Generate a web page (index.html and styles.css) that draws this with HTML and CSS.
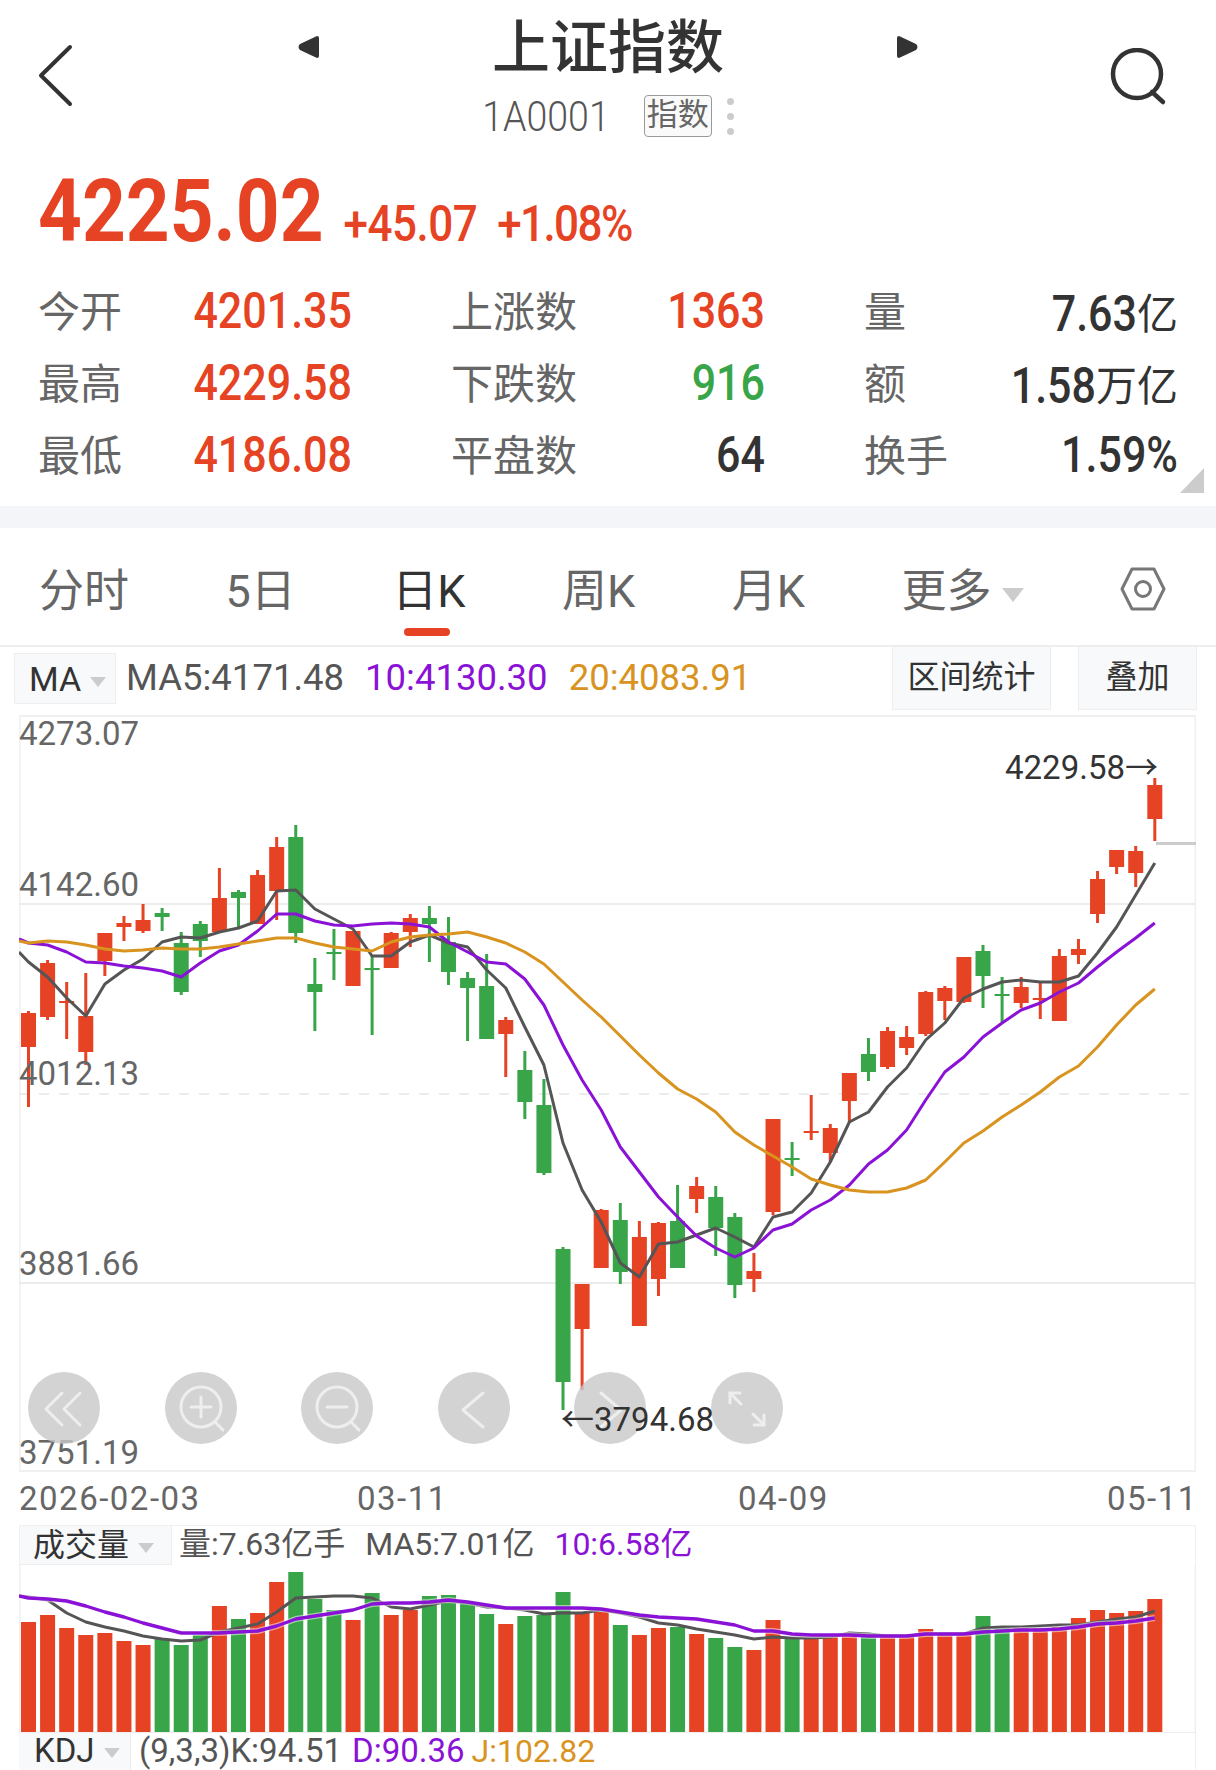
FILE: index.html
```html
<!DOCTYPE html>
<html lang="zh-CN">
<head>
  <meta charset="UTF-8">
  <title>上证指数</title>
  <link rel="stylesheet" href="styles.css">
</head>
<body>

<header class="topbar">
  <svg class="back-icon" width="40" height="66" viewBox="0 0 40 66">
    <polyline points="34,3 5,31.5 34,60" />
  </svg>
  <div class="title-block">
    <div class="title-row">
      <svg width="22" height="26" viewBox="0 0 22 26"><path d="M20 2 L3 10 Q0 13 3 16 L20 24 Q22 24 22 22 L22 4 Q22 2 20 2 Z" /></svg>
      <h1>上证指数</h1>
      <svg width="22" height="26" viewBox="0 0 22 26"><path d="M2 2 L19 10 Q22 13 19 16 L2 24 Q0 24 0 22 L0 4 Q0 2 2 2 Z" /></svg>
    </div>
    <div class="code-row">
      <span class="code">1A0001</span>
      <span class="badge">指数</span>
      <span class="dots"><i></i><i></i><i></i></span>
    </div>
  </div>
  <svg class="search-icon" width="58" height="58" viewBox="0 0 58 58">
    <circle cx="27" cy="26" r="24" />
    <line x1="42" y1="44" x2="53" y2="54" />
  </svg>
</header>

<section class="quote">
  <span class="price">4225.02</span>
  <span class="change">+45.07</span>
  <span class="change change-pct">+1.08%</span>
</section>

<section class="stats">
  <div class="stat"><span class="stat-label">今开</span><span class="stat-value up">4201.35</span></div>
  <div class="stat"><span class="stat-label">上涨数</span><span class="stat-value up">1363</span></div>
  <div class="stat"><span class="stat-label">量</span><span class="stat-value">7.63<small>亿</small></span></div>
  <div class="stat"><span class="stat-label">最高</span><span class="stat-value up">4229.58</span></div>
  <div class="stat"><span class="stat-label">下跌数</span><span class="stat-value down">916</span></div>
  <div class="stat"><span class="stat-label">额</span><span class="stat-value">1.58<small>万亿</small></span></div>
  <div class="stat"><span class="stat-label">最低</span><span class="stat-value up">4186.08</span></div>
  <div class="stat"><span class="stat-label">平盘数</span><span class="stat-value">64</span></div>
  <div class="stat"><span class="stat-label">换手</span><span class="stat-value">1.59%</span></div>
  <span class="corner"></span>
</section>

<div class="band"></div>

<nav class="tabs">
  <a class="tab">分时</a>
  <a class="tab">5日</a>
  <a class="tab tab-active">日K</a>
  <a class="tab">周K</a>
  <a class="tab">月K</a>
  <a class="tab">更多<span class="caret caret-tab"></span></a>
  <svg class="hex-icon" width="46" height="46" viewBox="0 0 46 46">
    <polygon points="12,3 34,3 44,23 34,43 12,43 2,23" />
    <circle cx="23" cy="23" r="7.5" />
  </svg>
</nav>

<div class="ma-row">
  <div class="picker picker-ma">MA<span class="caret"></span></div>
  <span class="legend">MA5:4171.48</span>
  <span class="legend purple">10:4130.30</span>
  <span class="legend orange">20:4083.91</span>
  <a class="tool tool-range">区间统计</a>
  <a class="tool tool-add">叠加</a>
</div>

<section class="kline">
  <svg id="kline-chart" width="1177" height="757" viewBox="19 715 1177 757"></svg>

  <div class="y-labels">
    <span>4273.07</span>
    <span>4142.60</span>
    <span>4012.13</span>
    <span>3881.66</span>
    <span>3751.19</span>
  </div>

  <div class="float-buttons">
    <svg class="round-btn" width="72" height="72" viewBox="-36 -36 72 72"><polyline points="-2,-15 -18,1 -2,17" /><polyline points="16,-15 0,1 16,17" /></svg>
    <svg class="round-btn" width="72" height="72" viewBox="-36 -36 72 72"><circle cx="0" cy="-1" r="20" /><line x1="14" y1="14" x2="22" y2="22" /><line x1="-10" y1="-1" x2="10" y2="-1" /><line x1="0" y1="-11" x2="0" y2="9" /></svg>
    <svg class="round-btn" width="72" height="72" viewBox="-36 -36 72 72"><circle cx="0" cy="-1" r="20" /><line x1="14" y1="14" x2="22" y2="22" /><line x1="-10" y1="-1" x2="10" y2="-1" /></svg>
    <svg class="round-btn" width="72" height="72" viewBox="-36 -36 72 72"><polyline points="9,-15 -11,2 9,19" /></svg>
    <svg class="round-btn" width="72" height="72" viewBox="-36 -36 72 72"><polyline points="-9,-15 11,2 -9,19" /></svg>
    <svg class="round-btn" width="72" height="72" viewBox="-36 -36 72 72"><polyline points="-7,-15 -17,-15 -17,-5" /><line x1="-17" y1="-15" x2="-6" y2="-4" /><polyline points="17,7 17,17 7,17" /><line x1="17" y1="17" x2="6" y2="6" /></svg>
  </div>

  <span class="mark mark-high">4229.58→</span>
  <span class="mark mark-low">←3794.68</span>
</section>

<div class="dates">
  <span>2026-02-03</span>
  <span>03-11</span>
  <span>04-09</span>
  <span>05-11</span>
</div>

<section class="volume">
  <div class="volume-head">
    <div class="picker picker-vol">成交量<span class="caret"></span></div>
    <span class="vol-text">量:7.63亿手</span>
    <span class="vol-text">MA5:7.01亿</span>
    <span class="vol-text purple">10:6.58亿</span>
  </div>
  <svg id="volume-chart" width="1177" height="167" viewBox="19 1565 1177 167"></svg>
</section>

<div class="kdj-row">
  <div class="picker picker-kdj">KDJ<span class="caret"></span></div>
  <span class="kdj-text">(9,3,3)K:94.51</span>
  <span class="kdj-text purple">D:90.36</span>
  <span class="kdj-text orange">J:102.82</span>
</div>

<script src="chart.js"></script>
</body>
</html>
```

FILE: styles.css
```css
/* General */
body {
  margin: 0;
  width: 1216px;
  height: 1770px;
  overflow: hidden;
  background: #fff;
  color: #333;
  font-family: Roboto, "Noto Sans CJK SC", sans-serif;
}

/* Top bar */
.topbar {
  display: flex;
  align-items: flex-start;
  height: 145px;
  padding: 10px 48px 0 36px;
  box-sizing: border-box;
}
.back-icon {
  margin-top: 34px;
  fill: none;
  stroke: #333;
  stroke-width: 4;
  stroke-linecap: round;
  stroke-linejoin: round;
}
.search-icon {
  margin-top: 38px;
  margin-left: auto;
  fill: none;
  stroke: #333;
  stroke-width: 4.5;
  stroke-linecap: round;
}
.title-block {
  width: 622px;
  margin-left: 221px;
}
.title-row {
  display: flex;
  justify-content: space-between;
  align-items: center;
  height: 76px;
  fill: #333;
}
.title-row svg { margin-top: -2px; }
h1 {
  margin: 0;
  font-size: 58px;
  line-height: 76px;
  font-weight: 500;
  color: #333;
}
.code-row {
  display: flex;
  justify-content: center;
  align-items: center;
  height: 46px;
  margin-top: 7px;
}
.code {
  display: inline-block;
  font-size: 37.5px;
  font-weight: 300;
  color: #555;
  transform: scaleY(1.15);
}
.badge {
  margin-left: 34px;
  width: 68px;
  height: 42px;
  box-sizing: border-box;
  border: 1px solid #999;
  border-radius: 4px;
  font-size: 31px;
  line-height: 38px;
  text-align: center;
  color: #666;
  background: #fafafa;
}
.dots {
  display: flex;
  flex-direction: column;
  gap: 8px;
  margin-left: 15px;
}
.dots i {
  width: 7px;
  height: 7px;
  border-radius: 50%;
  background: #ccc;
}

/* Price, Roboto is wider than the app's number font so digits get stretched up */
.quote {
  display: flex;
  align-items: baseline;
  height: 130px;
  padding: 11px 0 0 38px;
  box-sizing: border-box;
}
.price {
  display: inline-block;
  font-size: 76.5px;
  line-height: 110px;
  font-weight: 700;
  color: #e64325;
  transform: scaleY(1.15);
}
.change {
  display: inline-block;
  margin-left: 20px;
  font-size: 44px;
  font-weight: 500;
  letter-spacing: -0.5px;
  color: #e64325;
  transform: translateY(2px) scaleY(1.15);
}
.change-pct { letter-spacing: -1.6px; }

/* Stat rows */
.stats {
  position: relative;
  display: grid;
  grid-template-columns: 314px 314px 314px;
  column-gap: 99px;
  grid-auto-rows: 72px;
  height: 231px;
  padding-left: 38px;
}
.stat {
  display: flex;
  justify-content: space-between;
  align-items: center;
}
.stat-label {
  margin-top: -5px;
  font-size: 42px;
  color: #666;
}
.stat-value {
  display: inline-block;
  margin-top: -2px;
  font-size: 43px;
  font-weight: 500;
  transform: scaleY(1.18);
}
.stat-value small {
  display: inline-block;
  font-size: 41px;
  font-weight: 400;
  transform: scaleY(0.88);
}
.corner {
  position: absolute;
  right: 12px;
  bottom: 13px;
  width: 24px;
  height: 25px;
  background: #ccc;
  clip-path: polygon(100% 0, 100% 100%, 0 100%);
}
.band {
  height: 22px;
  background: #f3f5f9;
}

/* Tabs */
.tabs {
  display: flex;
  align-items: center;
  gap: 96.5px;
  height: 119px;
  padding: 11px 0 0 39px;
  box-sizing: border-box;
  border-bottom: 2px solid #eee;
}
.tab {
  position: relative;
  font-size: 45px;
  line-height: 60px;
  color: #666;
}
.tab-active { color: #333; }
.tab-active::after {
  content: "";
  position: absolute;
  left: 12px;
  bottom: -14px;
  width: 46px;
  height: 8px;
  border-radius: 4px;
  background: #e64325;
}
.caret {
  display: inline-block;
  width: 0;
  height: 0;
  margin-left: 9px;
  border-left: 8px solid transparent;
  border-right: 8px solid transparent;
  border-top: 10px solid #ccc;
  vertical-align: middle;
}
.caret-tab {
  margin-left: 10px;
  border-left-width: 11px;
  border-right-width: 11px;
  border-top-width: 14px;
}
.hex-icon {
  fill: none;
  stroke: #777;
  stroke-width: 3;
  stroke-linejoin: round;
  margin-bottom: 6px;
}

/* MA legend row */
.ma-row {
  display: flex;
  align-items: flex-start;
  height: 68px;
}
.picker {
  box-sizing: border-box;
  background: #f8f9fb;
  border-right: 1px solid #eee;
  border-bottom: 1px solid #eee;
  color: #333;
  white-space: nowrap;
}
.picker-ma {
  width: 102px;
  height: 51px;
  margin: 6px 10px 0 14px;
  padding-left: 14px;
  font-size: 34px;
  line-height: 50px;
  border-top: 1px solid #eee;
  border-left: 1px solid #eee;
}
.legend {
  margin-right: 21px;
  font-size: 36.5px;
  line-height: 62px;
  color: #555;
}
.tool {
  box-sizing: border-box;
  height: 63px;
  background: #f8f9fb;
  border-right: 1px solid #eee;
  border-bottom: 1px solid #eee;
  border-left: 1px solid #eee;
  font-size: 32px;
  line-height: 60px;
  text-align: center;
  color: #333;
}
.tool-range {
  width: 159px;
  margin-left: auto;
}
.tool-add {
  width: 119px;
  margin: 0 19px 0 27px;
}

/* K line panel */
.kline {
  position: relative;
  width: 1177px;
  height: 757px;
  margin-left: 19px;
}
.kline svg { display: block; }
.y-labels {
  position: absolute;
  top: 0;
  left: 0;
  display: grid;
  grid-template-rows: 38px 151px 189px 190px 189px;
  font-size: 33px;
  color: #666;
}
.y-labels span {
  align-self: end;
  line-height: 38px;
}
.float-buttons {
  position: absolute;
  left: 9px;
  top: 657px;
  display: flex;
  gap: 64.5px;
}
.round-btn {
  border-radius: 50%;
  background: rgba(200, 200, 200, 0.8);
  fill: none;
  stroke: #eee;
  stroke-width: 3;
  stroke-linecap: round;
  stroke-linejoin: round;
}
.mark {
  position: absolute;
  font-size: 33px;
  line-height: 38px;
  color: #333;
  white-space: nowrap;
}
.mark-high { left: 986px; top: 34px; }
.mark-low { left: 542px; top: 686px; }

/* Date axis */
.dates {
  display: grid;
  grid-template-columns: 338px 381px 369px auto;
  height: 53px;
  padding-left: 19px;
  font-size: 33px;
  line-height: 54px;
  letter-spacing: 1.5px;
  color: #666;
}

/* Volume panel */
.volume {
  width: 1177px;
  height: 207px;
  margin-left: 19px;
}
.volume svg { display: block; }
.volume-head {
  display: flex;
  align-items: flex-start;
  box-sizing: border-box;
  height: 40px;
  border-top: 1px solid #f0f0f0;
  border-left: 1px solid #f0f0f0;
  border-right: 1px solid #f0f0f0;
}
.picker-vol {
  width: 152px;
  height: 39px;
  padding-left: 13px;
  font-size: 32px;
  line-height: 38px;
}
.vol-text {
  margin-left: 7px;
  margin-right: 13px;
  font-size: 32px;
  line-height: 36px;
  color: #555;
}

/* KDJ row */
.kdj-row {
  display: flex;
  align-items: flex-start;
  box-sizing: border-box;
  width: 1177px;
  height: 38px;
  margin-left: 19px;
  border-top: 1px solid #eee;
  border-right: 1px solid #f0f0f0;
}
.picker-kdj {
  width: 112px;
  height: 38px;
  padding-left: 15px;
  font-size: 33px;
  line-height: 36px;
  border-bottom: 0;
}
.kdj-text {
  margin-left: 8px;
  margin-right: 2px;
  font-size: 33px;
  line-height: 36px;
  color: #555;
}
.kdj-text.orange {
  margin-left: 5px;
  font-size: 32px;
}

/* Quote colours */
.up { color: #e64325; }
.down { color: #38a549; }
.purple { color: #8a12d6; }
.orange { color: #d9931f; }
```

FILE: chart.js
```js
const RED = "#e64325";
const GREEN = "#38a549";
const GRAY = "#555";
const PURPLE = "#8a12d6";
const ORANGE = "#d9931f";

const firstX = 28.5;
const stepX = 19.09;

// colour, body top, body bottom, wick top, wick bottom (page pixels)
const candles = [
  ["r",1013,1047,1011,1107], ["r",963,1017,960,1020], ["r",1001,1003,982,1039], ["r",1016,1052,973,1065],
  ["r",933,961,933,976], ["r",923,927,916,941], ["r",920,931,904,933], ["g",913,917,908,931],
  ["g",943,992,932,995], ["g",924,941,921,957], ["r",898,932,868,932], ["g",892,898,890,927],
  ["r",875,924,870,924], ["r",847,891,837,920], ["g",837,933,825,943], ["g",984,992,958,1031],
  ["g",952,954,929,980], ["r",931,986,931,986], ["g",968,970,955,1035], ["r",933,968,932,968],
  ["r",918,932,914,947], ["g",918,924,906,962], ["g",942,972,917,985], ["g",978,988,972,1041],
  ["g",986,1039,954,1039], ["r",1020,1034,1017,1077], ["g",1070,1102,1051,1119], ["g",1105,1173,1079,1175],
  ["g",1249,1382,1247,1410], ["r",1284,1329,1284,1390], ["r",1210,1268,1209,1268], ["g",1220,1272,1203,1284],
  ["r",1237,1326,1221,1326], ["r",1223,1279,1222,1296], ["g",1221,1268,1185,1268], ["r",1186,1199,1177,1213],
  ["g",1197,1228,1186,1256], ["g",1217,1285,1213,1298], ["r",1271,1279,1253,1292], ["r",1119,1212,1119,1215],
  ["g",1158,1160,1142,1176], ["r",1131,1133,1095,1140], ["r",1128,1153,1124,1162], ["r",1073,1101,1073,1122],
  ["g",1054,1072,1038,1081], ["r",1031,1067,1027,1069], ["r",1037,1048,1026,1055], ["r",992,1034,991,1036],
  ["r",988,1001,986,1020], ["r",957,1002,957,1003], ["g",951,976,945,1008], ["g",994,996,977,1022],
  ["r",987,1003,977,1008], ["r",998,1000,982,1019], ["r",956,1021,949,1021], ["r",949,955,939,964],
  ["r",879,914,871,923], ["r",850,867,850,874], ["r",851,873,846,887], ["r",785,819,778,841]
];

const ma5 = [962,977,998,1016,984,970,959,942,937,938,932,928,921,891,890,909,919,929,956,956,
  942,935,943,947,970,988,1027,1065,1143,1190,1222,1263,1277,1244,1242,1235,1228,1237,1247,1217,
  1212,1193,1162,1122,1112,1087,1068,1040,1023,998,989,982,980,982,982,976,953,927,895,863];
const ma10 = [943,945,952,962,963,966,968,971,977,963,951,945,931,914,914,921,925,926,924,923,
  924,927,942,952,962,964,979,1005,1045,1080,1110,1147,1172,1197,1217,1236,1248,1257,1248,1230,
  1224,1210,1200,1185,1164,1150,1130,1100,1072,1057,1037,1023,1010,1003,992,983,967,952,938,923];
const ma20 = [943,941,942,945,949,951,950,948,949,949,947,944,941,938,938,943,947,949,951,942,
  937,935,934,932,937,943,952,964,982,1000,1017,1036,1055,1073,1089,1099,1112,1132,1145,1156,
  1167,1179,1185,1190,1192,1192,1188,1180,1162,1143,1131,1117,1105,1092,1077,1066,1047,1025,1005,989];

// bar colour and top edge for each day, all bars end at y=1732
const volumes = [
  ["r",1622],["r",1615],["r",1628],["r",1635],["r",1633],["r",1641],["r",1645],["g",1639],["g",1645],["g",1635],
  ["r",1606],["g",1619],["r",1613],["r",1582],["g",1572],["g",1599],["g",1610],["r",1620],["g",1593],["r",1615],
  ["r",1610],["g",1596],["g",1595],["g",1602],["g",1614],["r",1624],["g",1616],["g",1615],["g",1592],["r",1613],
  ["r",1612],["g",1625],["r",1635],["r",1628],["g",1627],["r",1634],["g",1638],["g",1647],["r",1650],["r",1620],
  ["g",1638],["r",1638],["r",1635],["r",1633],["g",1633],["r",1635],["r",1635],["r",1629],["r",1633],["r",1633],
  ["g",1616],["g",1628],["r",1628],["r",1628],["r",1627],["r",1618],["r",1610],["r",1613],["r",1611],["r",1599]
];
const volMa5 = [1597,1600,1613,1622,1627,1631,1636,1639,1641,1640,1632,1628,1624,1612,1598,1597,1596,1596,1598,1607,
  1609,1605,1601,1603,1607,1608,1610,1614,1613,1613,1610,1613,1617,1623,1625,1629,1632,1635,1639,1637,
  1638,1638,1637,1633,1634,1636,1636,1634,1634,1634,1628,1627,1627,1626,1625,1625,1622,1619,1617,1611];
const volMa10 = [1598,1599,1601,1606,1612,1617,1623,1628,1633,1633,1633,1632,1631,1626,1619,1616,1613,1610,1604,1603,
  1603,1602,1600,1602,1605,1608,1608,1608,1608,1608,1609,1612,1615,1617,1618,1619,1622,1625,1631,1631,
  1634,1635,1635,1635,1636,1636,1636,1634,1634,1634,1632,1631,1630,1630,1629,1627,1624,1623,1621,1618];

function xAt(i) {
  return firstX + stepX * i;
}

function rect(x, y, w, h, fill) {
  return `<rect x="${x}" y="${y}" width="${w}" height="${h}" fill="${fill}"/>`;
}

function line(x1, y1, x2, y2, stroke, extra = "") {
  return `<line x1="${x1}" y1="${y1}" x2="${x2}" y2="${y2}" stroke="${stroke}" stroke-width="2" ${extra}/>`;
}

// lines start at the left frame, startY is where they enter the chart
function trend(values, startY, stroke, width) {
  const points = [`19,${startY}`].concat(values.map((y, i) => `${xAt(i).toFixed(1)},${y}`));
  return `<polyline points="${points.join(" ")}" fill="none" stroke="${stroke}" stroke-width="${width}" stroke-linejoin="round"/>`;
}

function drawKline() {
  let out = "";
  // frame and grid
  out += line(19, 716, 1196, 716, "#f0f0f0");
  out += line(19.5, 715, 19.5, 1472, "#f0f0f0");
  out += line(1195.5, 715, 1195.5, 1472, "#f0f0f0");
  out += line(19, 1471, 1196, 1471, "#f0f0f0");
  out += line(19, 904, 1196, 904, "#ececec");
  out += line(19, 1094, 1196, 1094, "#ececec", 'stroke-dasharray="10 10"');
  out += line(19, 1283, 1196, 1283, "#ececec");
  out += rect(1156, 842, 40, 3, "#ccc");

  candles.forEach((c, i) => {
    const color = c[0] === "r" ? RED : GREEN;
    const x = xAt(i);
    out += rect(x - 1.5, c[3], 3, c[4] - c[3], color);
    out += rect(x - 7.5, c[1], 15, c[2] - c[1], color);
  });

  out += trend(ma5, 952, GRAY, 3);
  out += trend(ma10, 939, PURPLE, 3);
  out += trend(ma20, 941, ORANGE, 3);
  document.getElementById("kline-chart").innerHTML = out;
}

function drawVolume() {
  let out = "";
  out += line(1195.5, 1565, 1195.5, 1732, "#f0f0f0");
  out += line(19.5, 1565, 19.5, 1732, "#f0f0f0");
  volumes.forEach((v, i) => {
    out += rect(xAt(i) - 7.5, v[1], 15, 1732 - v[1], v[0] === "r" ? RED : GREEN);
  });
  out += trend(volMa5, 1596, GRAY, 3);
  out += trend(volMa10, 1596, "rgba(255,255,255,0.5)", 6);
  out += trend(volMa10, 1596, PURPLE, 3.4);
  document.getElementById("volume-chart").innerHTML = out;
}

drawKline();
drawVolume();
```
